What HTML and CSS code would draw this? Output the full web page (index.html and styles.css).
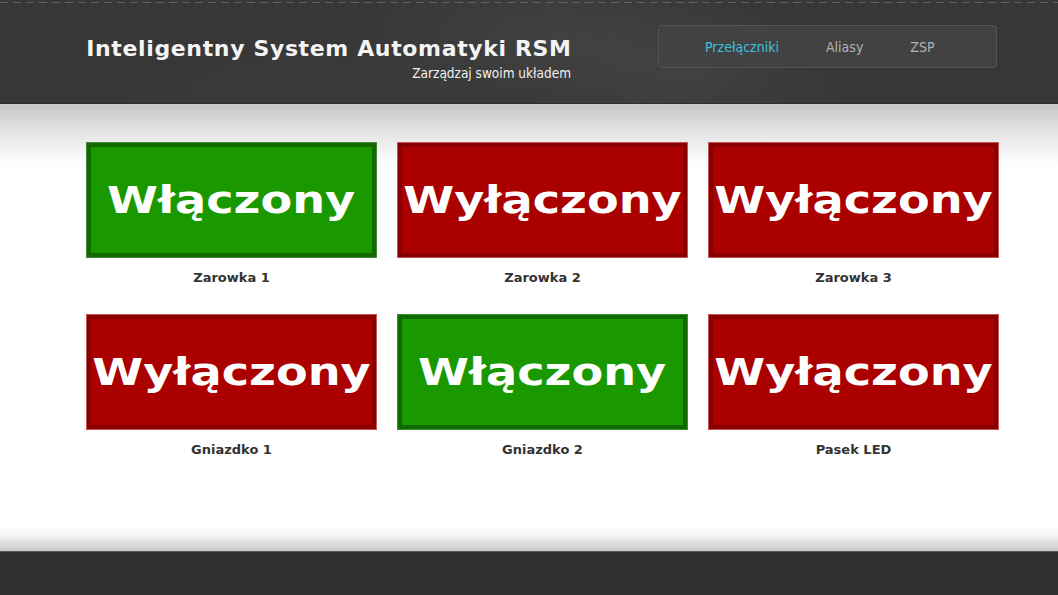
FILE: index.html
```html
<!DOCTYPE html>
<html lang="pl">
<head>
<meta charset="utf-8">
<title>Inteligentny System Automatyki RSM</title>
<link rel="stylesheet" href="styles.css">
</head>
<body>
<header class="header">
  <div class="dash"></div>
  <div class="header-inner">
    <div class="brand">
      <h1 class="title">Inteligentny System Automatyki RSM</h1>
      <div class="subtitle">Zarządzaj swoim układem</div>
    </div>
    <nav class="nav">
      <a class="nav-item active">Przełączniki</a>
      <a class="nav-item">Aliasy</a>
      <a class="nav-item">ZSP</a>
    </nav>
  </div>
</header>
<main class="main">
  <div class="grid">
    <div class="switch">
      <div class="btn on"><span class="btn-text">Włączony</span></div>
      <div class="label">Zarowka 1</div>
    </div>
    <div class="switch">
      <div class="btn off"><span class="btn-text">Wyłączony</span></div>
      <div class="label">Zarowka 2</div>
    </div>
    <div class="switch">
      <div class="btn off"><span class="btn-text">Wyłączony</span></div>
      <div class="label">Zarowka 3</div>
    </div>
    <div class="switch">
      <div class="btn off"><span class="btn-text">Wyłączony</span></div>
      <div class="label">Gniazdko 1</div>
    </div>
    <div class="switch">
      <div class="btn on"><span class="btn-text">Włączony</span></div>
      <div class="label">Gniazdko 2</div>
    </div>
    <div class="switch">
      <div class="btn off"><span class="btn-text">Wyłączony</span></div>
      <div class="label">Pasek LED</div>
    </div>
  </div>
</main>
<footer class="footer"></footer>
</body>
</html>
```
FILE: styles.css
```css
* { box-sizing: border-box; }
html, body { margin: 0; padding: 0; }
body {
  width: 1058px;
  height: 595px;
  overflow: hidden;
  font-family: "DejaVu Sans", Verdana, sans-serif;
  background: #303030;
  display: flex;
  flex-direction: column;
}
.header {
  height: 104px;
  flex: none;
  padding-top: 2px;
  background-color: #373737;
  background-image:
    radial-gradient(ellipse 220px 90px at 560px 40px, rgba(255,255,255,0.05), transparent),
    radial-gradient(ellipse 160px 80px at 700px 80px, rgba(255,255,255,0.04), transparent),
    radial-gradient(ellipse 200px 60px at 300px 90px, rgba(255,255,255,0.02), transparent);
  border-bottom: 1px solid #2f2f2f;
}
.dash {
  height: 1px;
  background: repeating-linear-gradient(90deg, #626262 0 8px, transparent 8px 13px);
}
.header-inner {
  display: flex;
  align-items: flex-start;
  padding-left: 87px;
}
.brand {
  width: 484px;
  display: flex;
  flex-direction: column;
  align-items: flex-end;
  padding-top: 32px;
}
.title {
  margin: 0;
  font-size: 22px;
  line-height: 28px;
  font-weight: bold;
  color: #f4f4f4;
  letter-spacing: 0.64px;
  white-space: nowrap;
  margin-right: -0.64px;
}
.subtitle {
  font-family: "DejaVu Sans Condensed", "DejaVu Sans", sans-serif;
  font-size: 13.5px;
  line-height: 16px;
  color: #f0f0f0;
  margin-top: 2px;
  white-space: nowrap;
}
.nav {
  margin-left: 87px;
  margin-top: 22px;
  width: 339px;
  height: 43px;
  background: #424242;
  border: 1px solid #555;
  border-radius: 3px;
  box-shadow: 0 0 1px rgba(0,0,0,0.4);
  display: flex;
  align-items: center;
  padding-left: 46px;
  gap: 47px;
}
.nav-item {
  font-family: "DejaVu Sans Condensed", "DejaVu Sans", sans-serif;
  font-size: 14px;
  color: #b2b2b2;
  text-decoration: none;
}
.nav-item.active { color: #3cc0dc; }
.main {
  height: 448px;
  flex: none;
  background: linear-gradient(to bottom, #c6c6c6 0px, #e2e2e2 25px, #fbfbfb 55px, #fff 65px, #fff 420px, #f6f6f6 430px, #c4c4c4 447px);
  border-top: 1px solid #cdcdcd;
  border-bottom: 1px solid #5a5a5a;
  padding: 37px 0 0 86px;
}
.grid {
  display: grid;
  grid-template-columns: repeat(3, 291px);
  column-gap: 20px;
  row-gap: 0;
}
.switch {
  height: 172px;
}
.btn {
  height: 116px;
  display: flex;
  align-items: center;
  justify-content: center;
  border: 1px solid;
  overflow: hidden;
}
.btn.on {
  background: #1a9800;
  border-color: #3f8a33;
  box-shadow: inset 0 0 0 4px #0f6a00;
}
.btn.off {
  background: #aa0000;
  border-color: #c25454;
  box-shadow: inset 0 0 0 4px #880000;
}
.btn-text {
  display: inline-block;
  font-weight: bold;
  font-size: 35px;
  color: #ffffff;
  transform: scale(1.32, 1.04);
  margin-top: 1px;
}
.label {
  text-align: center;
  font-weight: bold;
  font-size: 13px;
  line-height: 16px;
  color: #333;
  margin-top: 12px;
}
.footer {
  flex: 1;
  background: #303030;
}
```
